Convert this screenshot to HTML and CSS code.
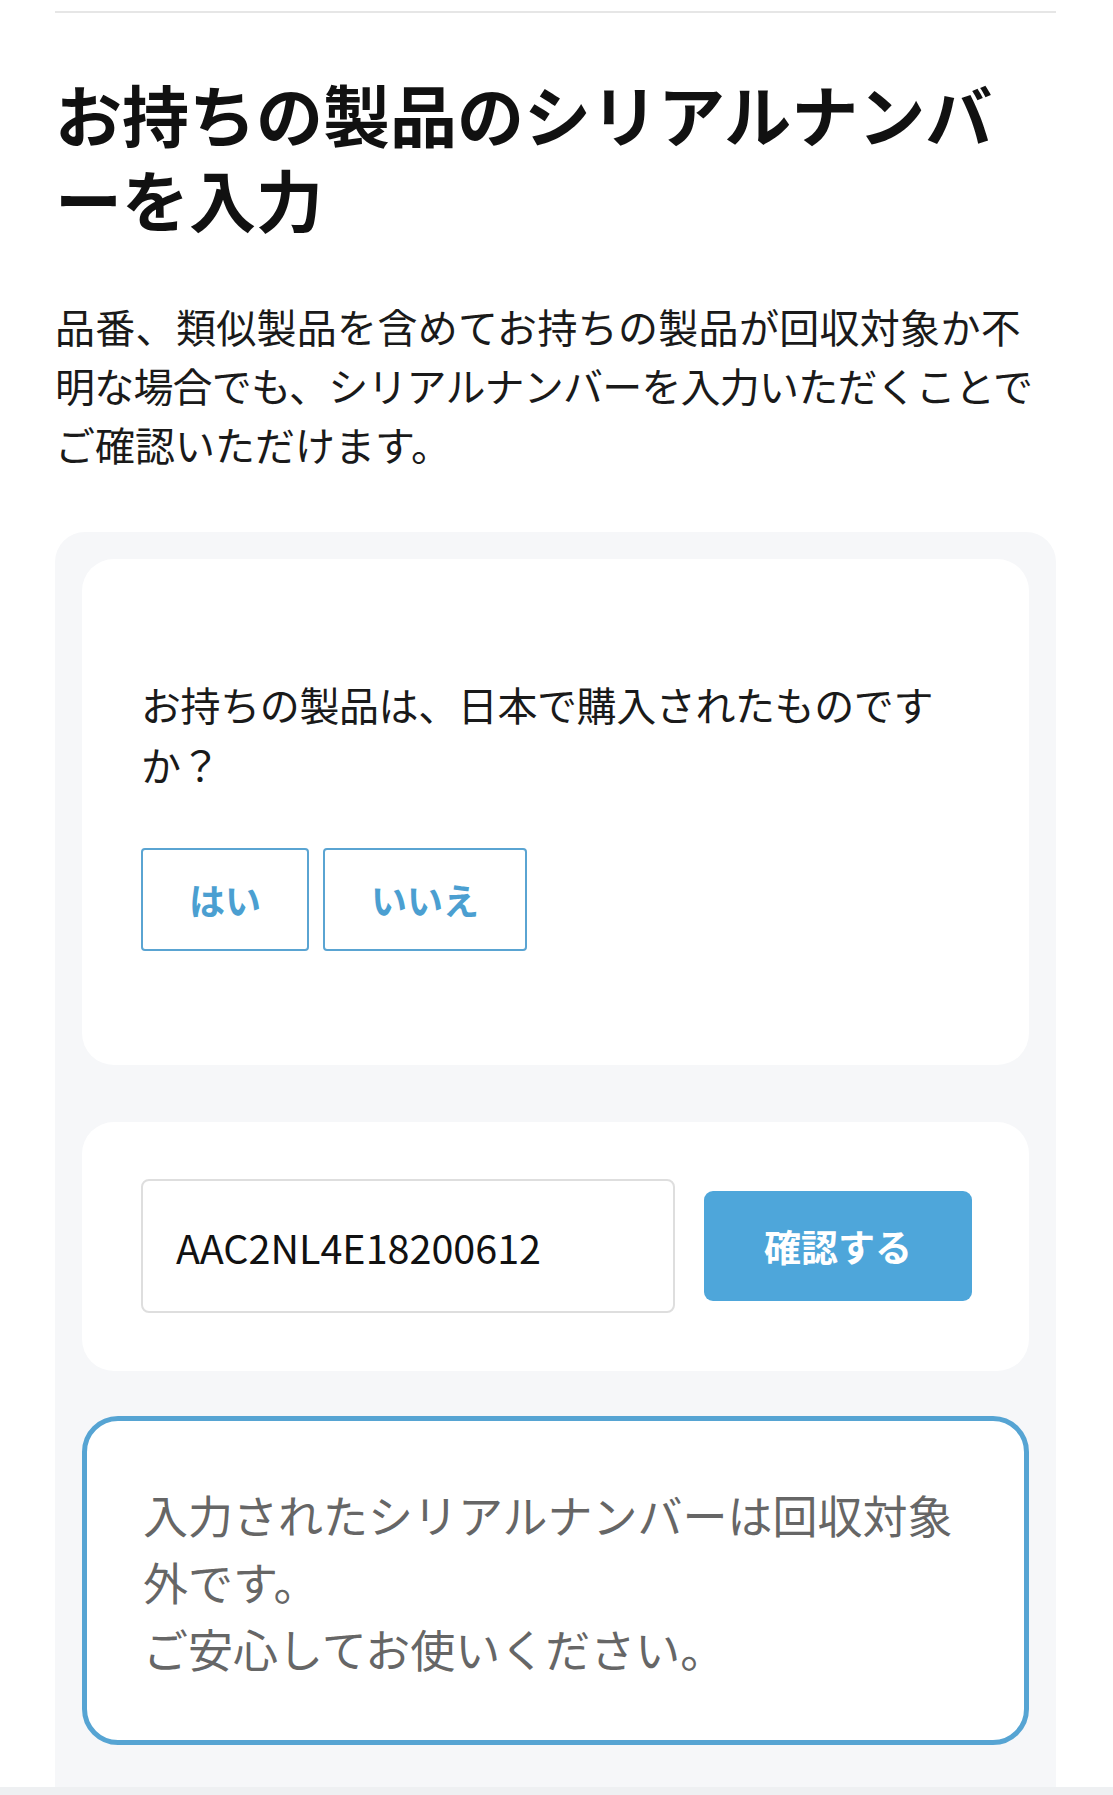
FILE: index.html
```html
<!DOCTYPE html>
<html lang="ja">
<head>
<meta charset="utf-8">
<title>シリアルナンバー入力</title>
<link rel="stylesheet" href="styles.css">
</head>
<body>
<main class="page">
  <hr class="divider">
  <h1 class="title">お持ちの製品のシリアルナンバーを入力</h1>
  <p class="lead"><span class="lead-wide">品番、類似製品を含めてお持ちの製品が回収対象か不</span><br><span class="lead-narrow">明な場合でも、シリアルナンバーを入力いただくことで</span><br>ご確認いただけます。</p>

  <section class="panel">
    <div class="card card-question">
      <p class="question">お持ちの製品は、日本で購入されたものですか？</p>
      <div class="choices">
        <button class="choice" type="button">はい</button>
        <button class="choice" type="button">いいえ</button>
      </div>
    </div>

    <div class="card card-form">
      <div class="serial-input">AAC2NL4E18200612</div>
      <button class="confirm" type="button">確認する</button>
    </div>

    <div class="result">
      <p class="result-text">入力されたシリアルナンバーは回収対象外です。<br>ご安心してお使いください。</p>
    </div>
  </section>
  <div class="footer-strip"></div>
</main>
</body>
</html>
```

FILE: styles.css
```css
html, body {
  margin: 0;
  padding: 0;
  background: #ffffff;
}

body {
  font-family: "Noto Sans CJK JP", "Noto Sans", sans-serif;
  color: #1a1a1a;
}

.page {
  padding: 11px 57px 0 55px;
}

.divider {
  margin: 0;
  border: 0;
  border-top: 2px solid #e6e6e6;
  height: 0;
}

.title {
  margin: 57px 0 0;
  font-size: 67px;
  line-height: 85px;
  font-weight: 700;
  color: #111;
}

.lead {
  margin: 57px 0 0;
  font-size: 40px;
  line-height: 59px;
  font-weight: 400;
  white-space: nowrap;
  color: #1a1a1a;
}

.lead-wide {
  letter-spacing: 0.3px;
}

.lead-narrow {
  letter-spacing: -0.8px;
}

.panel {
  margin-top: 58px;
  background: #f6f7f9;
  border-radius: 30px 30px 0 0;
  padding: 27px 27px 42px 27px;
  display: flex;
  flex-direction: column;
}

.card {
  background: #ffffff;
  border-radius: 32px;
}

.card-question {
  padding: 115px 58px 114px 59px;
}

.question {
  margin: 0;
  font-size: 40px;
  line-height: 60px;
  letter-spacing: -0.4px;
  color: #1a1a1a;
}

.choices {
  margin-top: 54px;
  display: flex;
  gap: 14px;
}

.choice {
  font-family: inherit;
  background: #ffffff;
  border: 2px solid #5aa4d2;
  border-radius: 4px;
  color: #4b9fd1;
  font-size: 36px;
  font-weight: 700;
  line-height: 35px;
  padding: 32px 46px;
  margin: 0;
}

.card-form {
  margin-top: 57px;
  padding: 57px 56px 58px 59px;
  display: flex;
  align-items: center;
  gap: 29px;
}

.serial-input {
  box-sizing: border-box;
  width: 534px;
  height: 134px;
  border: 2px solid #dedede;
  border-radius: 8px;
  padding-left: 33px;
  display: flex;
  align-items: center;
  font-size: 39.5px;
  color: #111;
}

.confirm {
  font-family: inherit;
  box-sizing: border-box;
  width: 268px;
  height: 110px;
  border: 0;
  border-radius: 9px;
  background: #4ea6da;
  color: #ffffff;
  font-size: 37px;
  font-weight: 700;
  margin: 0;
  padding: 0;
}

.result {
  margin-top: 45px;
  background: #ffffff;
  border: 5px solid #56a4d3;
  border-radius: 36px;
  padding: 60px 58px 58px 56px;
}

.result-text {
  margin: 0;
  font-size: 45px;
  line-height: 67px;
  color: #666666;
}

.footer-strip {
  height: 40px;
  margin: 0 -57px 0 -55px;
  background: #eef0f2;
}
```
